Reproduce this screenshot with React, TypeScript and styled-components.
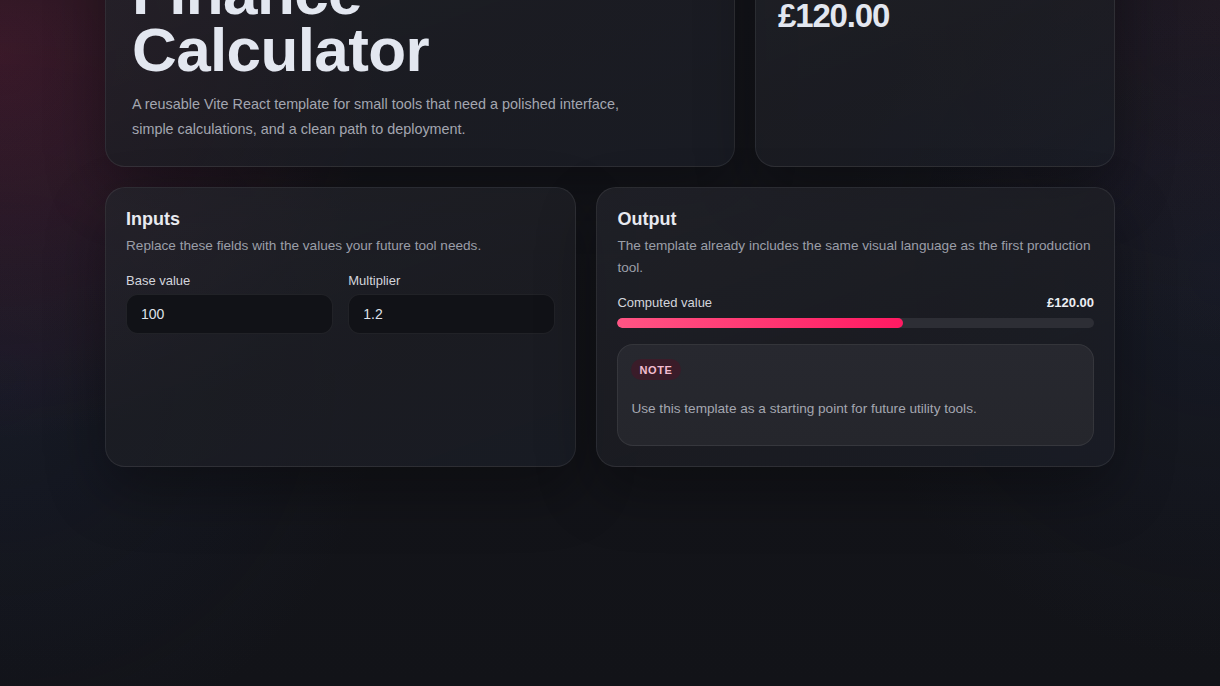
import React, { useState } from "react"
import styled, { createGlobalStyle } from "styled-components"

const GlobalStyle = createGlobalStyle`
  * {
    box-sizing: border-box;
  }
  html, body {
    margin: 0;
    background: #121318;
  }
  body {
    font-family: "Liberation Sans", Arial, sans-serif;
    color: #e4e7ef;
    -webkit-font-smoothing: antialiased;
  }
`

export const S = {
  Page: styled.div`
    min-height: 100vh;
    padding: 0 0 220px;
    background:
      radial-gradient(circle at 0% 8%, rgba(150, 30, 70, 0.28), transparent 28%),
      radial-gradient(circle at 0% 55%, rgba(40, 60, 110, 0.14), transparent 30%),
      radial-gradient(circle at 100% 40%, rgba(40, 60, 110, 0.12), transparent 30%),
      radial-gradient(circle at 100% 0%, rgba(120, 40, 70, 0.1), transparent 25%),
      linear-gradient(180deg, #15161c 0%, #121318 100%);
    overflow: hidden;
  `,

  // the page is shown scrolled down, so the top of the hero sits above the window
  Main: styled.main`
    width: 1010px;
    margin: -103px auto 0;
    display: flex;
    flex-direction: column;
    gap: 20px;
  `,

  Row: styled.section<{ $cols: string }>`
    display: grid;
    grid-template-columns: ${(p) => p.$cols};
    gap: 20px;
  `,

  Card: styled.div<{ $pad?: string }>`
    border-radius: 20px;
    border: 1px solid rgba(255, 255, 255, 0.075);
    background: linear-gradient(
      160deg,
      rgba(36, 37, 44, 0.72) 0%,
      rgba(29, 30, 36, 0.78) 55%,
      rgba(26, 29, 38, 0.8) 100%
    );
    box-shadow: 0 24px 60px rgba(0, 0, 0, 0.32);
    padding: ${(p) => p.$pad || "20px"};
    display: flex;
    flex-direction: column;
  `,

  Eyebrow: styled.span`
    align-self: flex-start;
    height: 24px;
    padding: 0 12px;
    border-radius: 999px;
    background: rgba(255, 40, 100, 0.14);
    color: #f4b5c9;
    font-size: 11px;
    font-weight: 700;
    letter-spacing: 0.08em;
    text-transform: uppercase;
    display: flex;
    align-items: center;
    margin-bottom: 16px;
  `,

  HeroTitle: styled.h1`
    margin: 0 0 14px;
    font-size: 62px;
    line-height: 0.92;
    font-weight: 700;
    letter-spacing: -0.01em;
    color: #e3e7f0;
  `,

  HeroText: styled.p`
    margin: 0;
    max-width: 510px;
    font-size: 14.4px;
    line-height: 1.74;
    color: #a3a6b0;
  `,

  StatLabel: styled.span`
    display: block;
    margin-bottom: 18px;
    font-size: 13px;
    line-height: 20px;
    color: #a3a6b0;
  `,

  StatValue: styled.div`
    font-size: 33px;
    line-height: 1.1;
    font-weight: 700;
    letter-spacing: -0.035em;
    color: #e3e7f0;
  `,

  PanelTitle: styled.h2`
    margin: 2px 0 5px;
    font-size: 18px;
    line-height: 1.1;
    font-weight: 700;
    color: #e8eaf0;
  `,

  PanelText: styled.p`
    margin: 0 0 16px;
    font-size: 13.6px;
    line-height: 1.6;
    color: #9b9ea8;
  `,

  Fields: styled.div`
    display: grid;
    grid-template-columns: 1fr 1fr;
    gap: 15px;
  `,

  Field: styled.label`
    display: flex;
    flex-direction: column;
    gap: 5px;
  `,

  FieldLabel: styled.span`
    font-size: 13px;
    line-height: 16px;
    color: #d3d5dc;
  `,

  Input: styled.input`
    height: 40px;
    width: 100%;
    padding: 0 14px;
    border-radius: 12px;
    border: 1px solid rgba(255, 255, 255, 0.07);
    background: #111217;
    color: #dfe2ea;
    font-family: inherit;
    font-size: 14px;
    outline: none;
  `,

  ResultRow: styled.div`
    display: flex;
    justify-content: space-between;
    align-items: baseline;
    font-size: 13px;
    line-height: 16px;
    color: #d3d5dc;
    margin: 1px 0 7px;
  `,

  ResultValue: styled.strong`
    font-weight: 700;
    color: #eceef3;
  `,

  Track: styled.div`
    height: 10px;
    border-radius: 999px;
    background: #2d2e35;
    overflow: hidden;
    margin-bottom: 16px;
  `,

  Fill: styled.div`
    height: 100%;
    border-radius: 999px;
    background: linear-gradient(90deg, #ff5584 0%, #ff1a62 100%);
  `,

  Note: styled.div`
    border-radius: 16px;
    border: 1px solid rgba(255, 255, 255, 0.07);
    background: linear-gradient(180deg, #27282f 0%, #25262c 100%);
    padding: 14px 14px 14px 13px;
    display: flex;
    flex-direction: column;
    align-items: flex-start;
  `,

  Tag: styled.span`
    height: 21px;
    padding: 0 8px;
    border-radius: 999px;
    background: #3a1c29;
    color: #f3bcd0;
    font-size: 11px;
    font-weight: 700;
    letter-spacing: 0.06em;
    display: flex;
    align-items: center;
  `,

  NoteText: styled.p`
    margin: 18px 0 11px;
    font-size: 13.6px;
    line-height: 1.6;
    color: #a4a6b0;
  `,
}

const formatGBP = (n: number) =>
  "£" + n.toLocaleString("en-GB", { minimumFractionDigits: 2, maximumFractionDigits: 2 })

export default function App() {
  const [base, setBase] = useState("100")
  const [multiplier, setMultiplier] = useState("1.2")

  const result = (Number(base) || 0) * (Number(multiplier) || 0)
  const percent = Math.max(0, Math.min(100, (result / 200) * 100))

  return (
    <>
      <GlobalStyle />
      <S.Page>
        <S.Main>
          <S.Row $cols="1.75fr 1fr">
            <S.Card $pad="26px 26px 24px">
              <S.Eyebrow>Utility template</S.Eyebrow>
              <S.HeroTitle>
                Finance
                <br />
                Calculator
              </S.HeroTitle>
              <S.HeroText>
                A reusable Vite React template for small tools that need a polished interface,
                simple calculations, and a clean path to deployment.
              </S.HeroText>
            </S.Card>
            <S.Card $pad="22px">
              <S.Eyebrow>Live result</S.Eyebrow>
              <S.StatLabel>Current total</S.StatLabel>
              <S.StatValue>{formatGBP(result)}</S.StatValue>
            </S.Card>
          </S.Row>

          <S.Row $cols="1fr 1.1fr">
            <S.Card>
              <S.PanelTitle>Inputs</S.PanelTitle>
              <S.PanelText>Replace these fields with the values your future tool needs.</S.PanelText>
              <S.Fields>
                <S.Field>
                  <S.FieldLabel>Base value</S.FieldLabel>
                  <S.Input value={base} onChange={(e) => setBase(e.target.value)} />
                </S.Field>
                <S.Field>
                  <S.FieldLabel>Multiplier</S.FieldLabel>
                  <S.Input value={multiplier} onChange={(e) => setMultiplier(e.target.value)} />
                </S.Field>
              </S.Fields>
            </S.Card>

            <S.Card>
              <S.PanelTitle>Output</S.PanelTitle>
              <S.PanelText>
                The template already includes the same visual language as the first production tool.
              </S.PanelText>
              <S.ResultRow>
                <span>Computed value</span>
                <S.ResultValue>{formatGBP(result)}</S.ResultValue>
              </S.ResultRow>
              <S.Track>
                <S.Fill style={{ width: `${percent}%` }} />
              </S.Track>
              <S.Note>
                <S.Tag>NOTE</S.Tag>
                <S.NoteText>Use this template as a starting point for future utility tools.</S.NoteText>
              </S.Note>
            </S.Card>
          </S.Row>
        </S.Main>
      </S.Page>
    </>
  )
}
